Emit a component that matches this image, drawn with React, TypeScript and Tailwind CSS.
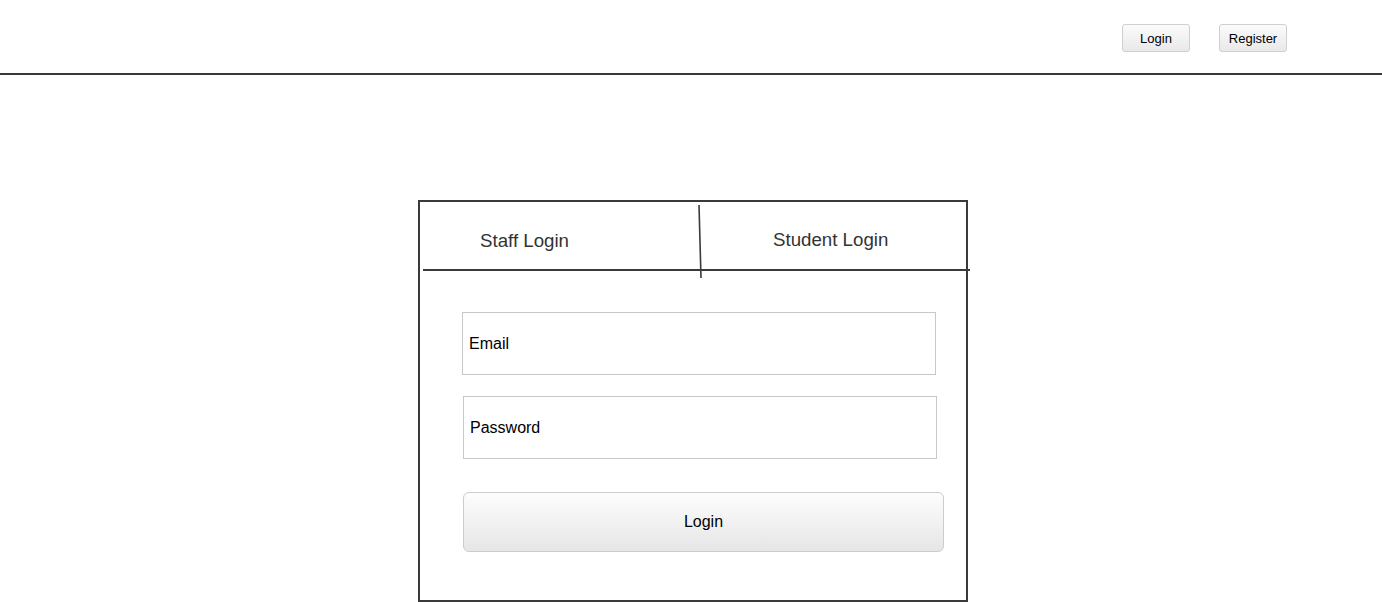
import React from "react";

export default function App() {
  const font = { fontFamily: '"Liberation Sans", Arial, sans-serif' };
  return (
    <div className="w-[1382px] h-[602px] overflow-hidden bg-white" style={font}>
      <header className="h-[75px] border-b-2 border-[#383838] flex items-start">
        <div className="ml-[1122px] mt-[24px] flex gap-[29px]">
          <button className="w-[68px] h-[28px] pt-[2px] rounded-[3px] border border-[#cfcfcf] bg-gradient-to-b from-[#fbfbfb] to-[#e9e9e9] text-[13px] text-black">
            Login
          </button>
          <button className="w-[68px] h-[28px] pt-[2px] rounded-[3px] border border-[#cfcfcf] bg-gradient-to-b from-[#fbfbfb] to-[#e9e9e9] text-[13px] text-black">
            Register
          </button>
        </div>
      </header>

      <div className="relative ml-[418px] mt-[125px] w-[550px] h-[402px] border-2 border-[#3a3a3a]">
        <div className="flex h-[67px]">
          <div className="w-[280px] pl-[60px] pt-[25px] text-[18.7px] text-[#333]">Staff Login</div>
          <div className="flex-1 pl-[73px] pt-[24px] text-[18.7px] text-[#333]">Student Login</div>
        </div>
        <div className="h-[2px] bg-[#3a3a3a] ml-[3px] -mr-[4px]" />

        <svg className="absolute left-[276px] top-[2px]" width="8" height="76" viewBox="0 0 8 76">
          <line x1="3" y1="1" x2="5" y2="74" stroke="#3a3a3a" strokeWidth="1.6" />
        </svg>

        <div className="flex flex-col">
          <div className="ml-[42px] mt-[41px] w-[474px] h-[63px] border border-[#c8c8c8] flex items-center pl-[6px] text-[16px] text-black">
            Email
          </div>
          <div className="ml-[43px] mt-[21px] w-[474px] h-[63px] border border-[#c8c8c8] flex items-center pl-[6px] text-[16px] text-black">
            Password
          </div>
          <button className="ml-[43px] mt-[33px] w-[481px] h-[60px] rounded-[6px] border border-[#cccccc] bg-gradient-to-b from-[#fdfdfd] to-[#e6e6e6] text-[16px] text-black">
            Login
          </button>
        </div>
      </div>
    </div>
  );
}
